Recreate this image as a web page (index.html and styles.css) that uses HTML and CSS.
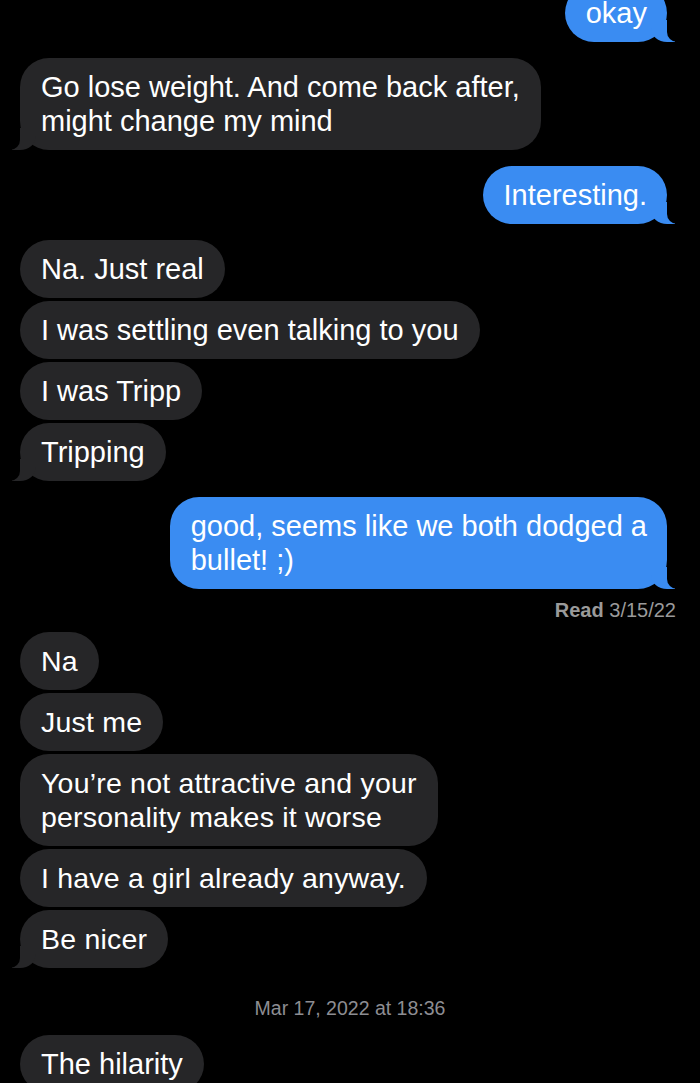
FILE: index.html
```html
<!DOCTYPE html>
<html lang="en">
<head>
  <meta charset="UTF-8">
  <meta name="viewport" content="width=device-width, initial-scale=1.0">
  <title>Messages</title>
  <link rel="stylesheet" href="styles.css">
</head>
<body>
  <div class="thread">
    <div class="group sent">
      <div class="bubble tail">okay</div>
    </div>

    <div class="group received">
      <div class="bubble tail">Go lose weight. And come back after,<br>might change my mind</div>
    </div>

    <div class="group sent">
      <div class="bubble tail">Interesting.</div>
    </div>

    <div class="group received">
      <div class="bubble">Na. Just real</div>
      <div class="bubble">I was settling even talking to you</div>
      <div class="bubble">I was Tripp</div>
      <div class="bubble tail">Tripping</div>
    </div>

    <div class="group sent">
      <div class="bubble tail wide">good, seems like we both dodged a<br>bullet! ;)</div>
      <div class="receipt"><b>Read</b> 3/15/22</div>
    </div>

    <div class="group received later">
      <div class="bubble">Na</div>
      <div class="bubble">Just me</div>
      <div class="bubble">You’re not attractive and your<br>personality makes it worse</div>
      <div class="bubble">I have a girl already anyway.</div>
      <div class="bubble tail">Be nicer</div>
    </div>

    <div class="stamp">Mar 17, 2022 at 18:36</div>

    <div class="group received">
      <div class="bubble">The hilarity</div>
    </div>
  </div>
</body>
</html>
```

FILE: styles.css
```css
html, body {
  margin: 0;
  background: #000;
}
body {
  font-family: 'Liberation Sans', Arial, sans-serif;
  color: #fff;
  overflow: hidden;
}
.thread {
  display: flex;
  flex-direction: column;
  gap: 16px;
  padding: 0 33px 0 20px;
  margin-top: -16px;
}
.group {
  display: flex;
  flex-direction: column;
  gap: 3px;
}
.group.sent {
  align-items: flex-end;
}
.group.received {
  align-items: flex-start;
}
.bubble {
  position: relative;
  font-size: 29px;
  line-height: 34px;
  padding: 12px 21px;
  border-radius: 29px;
}
.received .bubble {
  background: #262628;
}
.sent .bubble {
  background: #3a8cf2;
  padding-right: 20px;
}
.later .bubble {
  font-size: 28.5px;
  letter-spacing: 0.2px;
}

/* tails */
.bubble.tail::before,
.bubble.tail::after {
  content: "";
  position: absolute;
  bottom: 0;
  height: 22px;
}
.received .bubble.tail::before {
  left: -8px;
  width: 24px;
  background: #262628;
  border-bottom-right-radius: 16px 14px;
}
.received .bubble.tail::after {
  left: -12px;
  width: 12px;
  background: #000;
  border-bottom-right-radius: 10px;
}
.sent .bubble.tail::before {
  right: -8px;
  width: 24px;
  background: #3a8cf2;
  border-bottom-left-radius: 16px 14px;
}
.sent .bubble.tail::after {
  right: -12px;
  width: 12px;
  background: #000;
  border-bottom-left-radius: 10px;
}

.receipt {
  font-size: 20px;
  line-height: 20px;
  color: #9a9a9a;
  margin: 8px -9px -4px 0;
}
.receipt b {
  font-weight: bold;
}
.stamp {
  text-align: center;
  font-size: 19.5px;
  line-height: 20px;
  color: #8d8d92;
  margin: 14px 0 1px;
  padding-left: 13px;
}
```
